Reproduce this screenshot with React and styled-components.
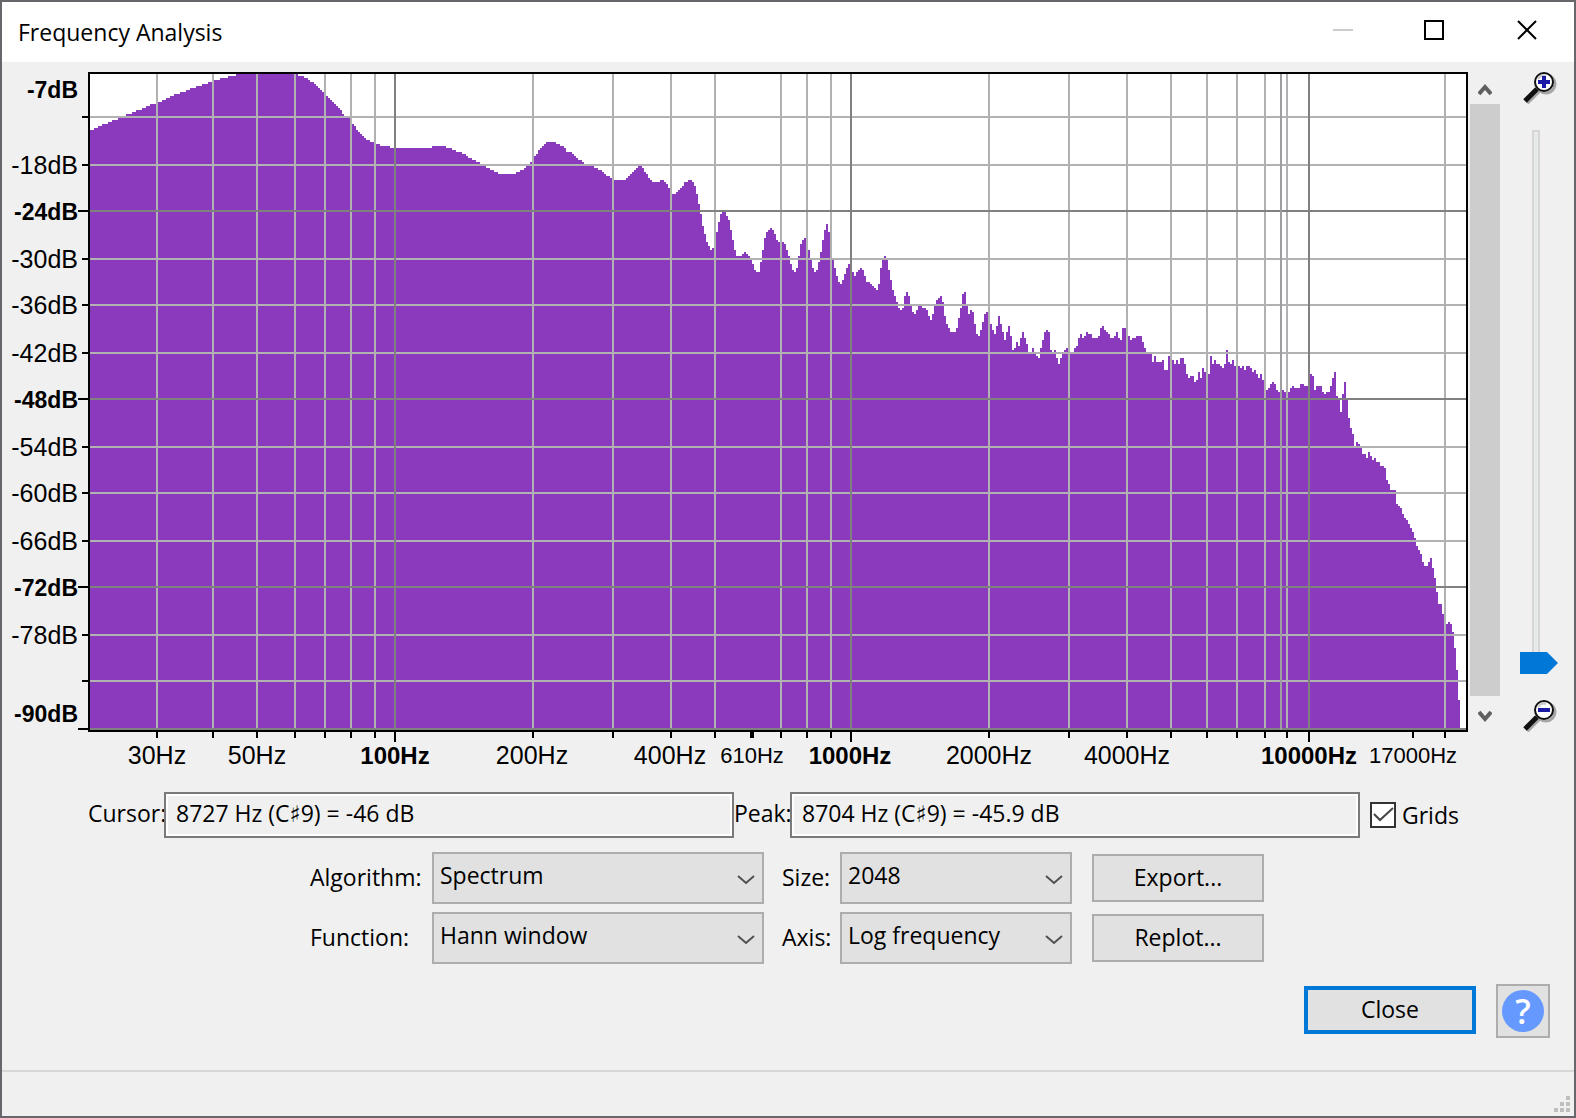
import React, { useState } from "react";
import styled, { createGlobalStyle } from "styled-components";

//Grid lines and ticks of the plot
const X_LINES = [
	156, 212, 256, 294, 324, 350, 374, 532, 612, 670, 714, 780, 806, 830, 988,
	1068, 1126, 1170, 1206, 1236, 1264, 1286, 1444,
];
const X_MAJOR = [394, 850, 1308];
const Y_LINES = [116, 164, 258, 304, 352, 446, 492, 540, 634, 680];
const Y_MAJOR = [210, 398, 586, 728];
const CURSOR_X = 1280;

const DB_LABELS = [
	{ y: 88, text: "-7dB", bold: true },
	{ y: 164, text: "-18dB" },
	{ y: 210, text: "-24dB", bold: true },
	{ y: 258, text: "-30dB" },
	{ y: 304, text: "-36dB" },
	{ y: 352, text: "-42dB" },
	{ y: 398, text: "-48dB", bold: true },
	{ y: 446, text: "-54dB" },
	{ y: 492, text: "-60dB" },
	{ y: 540, text: "-66dB" },
	{ y: 586, text: "-72dB", bold: true },
	{ y: 634, text: "-78dB" },
	{ y: 712, text: "-90dB", bold: true },
];

const HZ_LABELS = [
	{ x: 157, text: "30Hz" },
	{ x: 257, text: "50Hz" },
	{ x: 395, text: "100Hz", bold: true },
	{ x: 532, text: "200Hz" },
	{ x: 670, text: "400Hz" },
	{ x: 752, text: "610Hz", small: true },
	{ x: 850, text: "1000Hz", bold: true },
	{ x: 989, text: "2000Hz" },
	{ x: 1127, text: "4000Hz" },
	{ x: 1309, text: "10000Hz", bold: true },
	{ x: 1413, text: "17000Hz", small: true },
];

//Spectrum, one "x,y" pair for each step
const SPECTRUM = `
90,130 94,128 98,126 102,124 108,122 112,120 118,118 124,116 126,114 132,112
136,110 142,108 146,106 150,104 156,102 162,100 166,98 170,96 174,94 180,92
186,90 190,88 196,86 202,84 208,82 214,80 220,78 228,76 236,74 298,76 304,78
308,80 310,82 314,84 316,86 318,88 320,90 322,92 324,94 326,96 328,98 330,100
332,102 334,104 336,106 338,108 340,110 342,114 344,116 348,118 350,122
352,124 354,126 356,130 358,132 360,134 362,136 364,138 366,140 370,142
374,144 380,146 390,148 432,146 446,148 452,150 456,152 462,154 466,156
468,158 472,160 476,162 480,164 484,166 486,168 490,170 494,172 498,174
516,172 520,170 524,168 526,166 528,164 530,162 532,158 534,156 536,154
538,150 540,148 542,146 544,144 546,142 556,144 560,146 564,148 566,152
572,154 574,156 576,158 578,160 582,162 584,164 588,166 594,168 598,170
602,172 604,174 606,176 610,178 612,180 626,178 628,176 630,174 632,172
634,170 636,168 638,166 642,168 644,172 646,174 648,178 650,180 652,182
660,180 664,182 666,184 668,188 670,192 672,194 676,192 678,190 680,188
682,186 684,182 688,180 692,182 694,186 696,194 698,204 700,214 702,226
704,234 706,242 708,246 710,250 712,248 714,240 716,232 718,222 720,214
722,212 726,216 728,220 730,230 732,240 734,250 736,256 742,254 744,252
746,254 748,256 750,260 752,264 754,270 756,272 760,262 762,250 764,238
766,232 768,230 770,228 772,230 774,234 776,240 778,242 784,244 786,250
788,256 790,264 792,270 794,272 796,268 798,256 800,244 802,240 804,238
806,242 808,250 810,260 812,268 814,272 816,270 818,262 820,252 822,240
824,230 826,224 828,232 830,247 832,260 834,268 836,276 838,282 840,284
842,280 844,274 846,268 848,264 850,268 852,272 854,276 856,272 858,270
860,268 862,270 864,276 866,282 870,284 872,286 874,288 876,290 878,284
880,268 882,260 884,256 886,260 888,270 890,280 892,290 894,296 896,302
898,308 900,310 902,308 904,296 906,292 908,296 910,306 912,312 914,314
916,310 918,306 922,308 926,310 928,316 930,320 932,314 934,306 936,300
938,298 940,296 942,302 944,316 946,324 948,328 950,332 956,328 958,318
960,308 962,294 964,292 966,304 968,314 970,310 972,312 974,324 976,334
978,336 980,330 982,322 984,314 986,312 988,316 990,324 992,330 994,334
996,326 998,316 1000,324 1002,332 1004,340 1006,332 1008,326 1010,336
1012,350 1014,348 1016,342 1018,346 1020,338 1022,332 1024,338 1026,344
1028,352 1032,348 1034,352 1036,356 1038,358 1040,348 1042,340 1044,332
1046,330 1048,332 1050,350 1052,352 1054,350 1056,358 1058,364 1060,358
1062,352 1064,350 1066,348 1068,352 1074,348 1076,346 1078,338 1080,334
1082,338 1084,336 1086,332 1088,334 1092,338 1098,336 1100,328 1102,326
1104,330 1106,332 1108,334 1110,338 1114,336 1116,332 1118,338 1120,340
1122,328 1126,334 1128,336 1130,340 1132,338 1136,336 1142,342 1144,348
1146,352 1152,362 1154,356 1156,362 1162,360 1164,370 1168,356 1170,360
1174,364 1176,360 1178,364 1180,358 1184,364 1186,374 1188,378 1190,376
1194,382 1196,380 1198,372 1200,378 1202,368 1204,372 1206,374 1210,356
1212,364 1214,360 1216,364 1220,366 1222,368 1224,364 1226,350 1228,362
1230,364 1232,360 1234,366 1240,368 1242,366 1244,370 1246,366 1250,368
1252,372 1254,370 1256,374 1258,378 1260,374 1262,380 1264,386 1266,390
1268,388 1270,384 1272,382 1274,384 1276,390 1278,392 1282,390 1284,392
1290,388 1292,386 1294,388 1300,384 1304,386 1308,380 1310,374 1312,376
1314,390 1316,386 1322,392 1324,394 1326,392 1330,386 1332,378 1334,372
1336,396 1338,398 1340,412 1342,394 1344,382 1346,398 1348,418 1350,428
1352,434 1354,446 1356,442 1358,444 1360,448 1362,454 1366,458 1368,452
1370,456 1372,460 1374,458 1376,462 1380,466 1384,468 1386,480 1388,484
1390,490 1396,504 1398,506 1400,508 1402,514 1404,518 1406,520 1408,524
1410,528 1412,532 1414,538 1416,546 1418,550 1420,554 1422,562 1424,566
1428,562 1430,558 1432,568 1434,578 1436,592 1438,604 1442,614 1444,620
1446,624 1448,622 1450,624 1452,632 1454,648 1456,670 1458,700 1460,728
`;

const spectrumPath =
	"M90 730" +
	SPECTRUM.trim()
		.split(/\s+/)
		.map((pair) => {
			const [x, y] = pair.split(",");
			return `H${x}V${y}`;
		})
		.join("") +
	"V730Z";

const Plot = ({ grids }) => (
	<PlotSvg viewBox="2 62 1466 720" role="img" aria-label="Spectrum">
		<g shapeRendering="crispEdges">
			<rect x="90" y="74" width="1376" height="656" fill="#ffffff" />
			<path d={spectrumPath} fill="#8b3abd" />
			{grids && (
				<g>
					{X_LINES.map((x) => (
						<rect key={x} x={x} y="74" width="2" height="656" fill="#b1b0b3" />
					))}
					{Y_LINES.map((y) => (
						<rect key={y} x="90" y={y} width="1376" height="2" fill="#b1b0b3" />
					))}
					{X_MAJOR.map((x) => (
						<rect key={x} x={x} y="74" width="2" height="656" fill="#808080" />
					))}
					{Y_MAJOR.map((y) => (
						<rect key={y} x="90" y={y} width="1376" height="2" fill="#808080" />
					))}
				</g>
			)}
			<rect x={CURSOR_X} y="74" width="2" height="656" fill="#a09da2" />
			<rect x="89" y="73" width="1378" height="658" fill="none" stroke="#000" strokeWidth="2" />
			{[...X_LINES, 1412].map((x) => (
				<rect key={x} x={x} y="732" width="2" height="6" />
			))}
			<rect x="750" y="732" width="4" height="6" />
			{X_MAJOR.map((x) => (
				<rect key={x} x={x} y="732" width="2" height="10" />
			))}
			{Y_LINES.map((y) => (
				<rect key={y} x="82" y={y} width="6" height="2" />
			))}
			{Y_MAJOR.map((y) => (
				<rect key={y} x="78" y={y} width="10" height="2" />
			))}
		</g>
		{DB_LABELS.map(({ y, text, bold }) => (
			<AxisText key={text} x="78" y={y + 10} textAnchor="end" $size={bold ? 23 : 25} $bold={bold}>
				{text}
			</AxisText>
		))}
		{HZ_LABELS.map(({ x, text, bold, small }) => (
			<AxisText
				key={text}
				x={x}
				y={small ? 763 : 764}
				textAnchor="middle"
				$size={small ? 22 : bold ? 24 : 25}
				$bold={bold}
			>
				{text}
			</AxisText>
		))}
	</PlotSvg>
);

const Magnifier = ({ plus }) => (
	<svg width="34" height="34" viewBox="0 0 34 34" aria-hidden="true">
		<g fill="none" stroke="#a6a6a6">
			<circle cx="23" cy="14" r="9" strokeWidth="3" />
			<path d="M4 33L16 21" strokeWidth="4" />
		</g>
		<path d="M2 31L14 19" stroke="#111111" strokeWidth="5" />
		<circle cx="21" cy="12" r="9" fill="#ffffff" stroke="#111111" strokeWidth="2" />
		<path d="M15 9C17 6 20 5 23 6" fill="none" stroke="#c8c8c8" strokeWidth="2" />
		<path d="M15 12H27" stroke="#1a1aa6" strokeWidth="4" />
		{plus && <path d="M21 6V18" stroke="#1a1aa6" strokeWidth="4" />}
	</svg>
);

const ScrollArrow = ({ down }) => (
	<svg width="14" height="14" viewBox="0 0 14 14" aria-hidden="true">
		<path
			d={down ? "M1 3L7 10L13 3" : "M1 12L7 5L13 12"}
			fill="none"
			stroke="#606060"
			strokeWidth="4"
		/>
	</svg>
);

const Choice = ({ id, label, options, indent }) => (
	<>
		<FieldLabel htmlFor={id} $indent={indent}>
			{label}
		</FieldLabel>
		<SelectBox>
			<Select id={id}>
				{options.map((option) => (
					<option key={option}>{option}</option>
				))}
			</Select>
			<svg width="18" height="12" viewBox="0 0 18 12" aria-hidden="true">
				<path d="M1 2L9 9L17 2" fill="none" stroke="#505050" strokeWidth="2" />
			</svg>
		</SelectBox>
	</>
);

const App = () => {
	const [grids, setGrids] = useState(true);

	return (
		<>
			<GlobalStyle />
			<Dialog>
				<TitleBar>
					<Title>Frequency Analysis</Title>
					<WindowButton aria-label="Minimize" disabled>
						<svg width="22" height="22" viewBox="0 0 22 22">
							<path d="M2 10H22" stroke="#cccccc" strokeWidth="2" />
						</svg>
					</WindowButton>
					<WindowButton aria-label="Maximize">
						<svg width="22" height="22" viewBox="0 0 22 22">
							<rect x="2" y="1" width="18" height="18" fill="none" stroke="#000" strokeWidth="2" />
						</svg>
					</WindowButton>
					<WindowButton aria-label="Close window">
						<svg width="22" height="22" viewBox="0 0 22 22">
							<path d="M3 1L21 19M21 1L3 19" stroke="#000" strokeWidth="2" />
						</svg>
					</WindowButton>
				</TitleBar>

				<PlotArea>
					<Plot grids={grids} />
					<ScrollBar>
						<ScrollButton aria-label="Scroll up" $height={30}>
							<ScrollArrow />
						</ScrollButton>
						<ScrollTrack />
						<ScrollButton aria-label="Scroll down" $height={40}>
							<ScrollArrow down />
						</ScrollButton>
					</ScrollBar>
					<ZoomColumn>
						<Magnifier plus />
						<ZoomSlider type="range" min="0" max="100" defaultValue="0" aria-label="Zoom" />
						<Magnifier />
					</ZoomColumn>
				</PlotArea>

				<Readout>
					<ReadoutLabel htmlFor="cursor" $width={76}>
						Cursor:
					</ReadoutLabel>
					<ReadoutField id="cursor" readOnly value="8727 Hz (C♯9) = -46 dB" />
					<ReadoutLabel htmlFor="peak" $width={56}>
						Peak:
					</ReadoutLabel>
					<ReadoutField id="peak" readOnly value="8704 Hz (C♯9) = -45.9 dB" />
					<GridsLabel>
						<CheckBox>
							<input
								type="checkbox"
								checked={grids}
								onChange={(e) => setGrids(e.target.checked)}
							/>
							{grids && (
								<svg width="26" height="26" viewBox="0 0 26 26" aria-hidden="true">
									<path d="M4 12L10 18L23 6" fill="none" stroke="#454545" strokeWidth="2" />
								</svg>
							)}
						</CheckBox>
						Grids
					</GridsLabel>
				</Readout>

				<Controls>
					<Choice id="algorithm" label="Algorithm:" options={["Spectrum"]} />
					<Choice id="size" label="Size:" options={["2048"]} indent />
					<Button>Export...</Button>
					<Choice id="function" label="Function:" options={["Hann window"]} />
					<Choice id="axis" label="Axis:" options={["Log frequency"]} indent />
					<Button>Replot...</Button>
				</Controls>

				<Footer>
					<Button $primary>Close</Button>
					<HelpButton aria-label="Help">
						<span>?</span>
					</HelpButton>
				</Footer>

				<StatusBar>
					<svg width="16" height="16" viewBox="0 0 16 16" aria-hidden="true">
						<path
							d="M12 0h4v4h-4zM6 6h4v4H6zM12 6h4v4h-4zM0 12h4v4H0zM6 12h4v4H6zM12 12h4v4h-4z"
							fill="#bfbfbf"
						/>
					</svg>
				</StatusBar>
			</Dialog>
		</>
	);
};

const GlobalStyle = createGlobalStyle`
	* {
		box-sizing: border-box;
	}
	body {
		margin: 0;
		background: #f0f0f0;
		color: #000;
	}
	body, button, input, select {
		font-family: "Open Sans", "DejaVu Sans", sans-serif;
		font-size: 23px;
		line-height: 32px;
	}
	svg {
		display: block;
	}
`;

const Dialog = styled.main`
	display: flex;
	flex-direction: column;
	min-height: 100vh;
	border: 2px solid #66676a;
	background: #f0f0f0;
`;

const TitleBar = styled.header`
	display: flex;
	height: 60px;
	padding: 0 2px 0 16px;
	background: #fff;
`;

const Title = styled.h1`
	flex: 1;
	margin: 0;
	font-size: 23px;
	font-weight: 400;
	line-height: 60px;
`;

const WindowButton = styled.button`
	display: flex;
	align-items: center;
	justify-content: center;
	width: 92px;
	height: 58px;
	padding: 0;
	border: none;
	background: none;
`;

const PlotArea = styled.section`
	display: flex;
`;

const PlotSvg = styled.svg`
	flex: 1;
	min-width: 0;
`;

const AxisText = styled.text`
	font-family: "Liberation Sans", Arial, sans-serif;
	font-size: ${({ $size }) => $size}px;
	font-weight: ${({ $bold }) => ($bold ? 700 : 400)};
`;

const ScrollBar = styled.div`
	display: flex;
	flex-direction: column;
	width: 30px;
	margin: 12px 0 46px 2px;
`;

const ScrollButton = styled.button`
	display: flex;
	align-items: center;
	justify-content: center;
	height: ${({ $height }) => $height}px;
	padding: 0;
	border: none;
	background: none;
`;

const ScrollTrack = styled.div`
	flex: 1;
	background: #cdcdcd;
`;

const ZoomColumn = styled.div`
	display: flex;
	flex-direction: column;
	align-items: center;
	width: 74px;
	padding: 8px 0 50px 6px;
`;

const ZoomSlider = styled.input`
	flex: 1;
	width: 40px;
	min-height: 0;
	margin: 26px 0 24px;
	appearance: none;
	writing-mode: vertical-lr;
	direction: rtl;
	background:
		linear-gradient(#d6d6d6, #d6d6d6) 12px 0 / 8px 2px no-repeat,
		linear-gradient(
			90deg,
			transparent 12px,
			#d6d6d6 12px 14px,
			#e7eaea 14px 18px,
			#d6d6d6 18px 20px,
			transparent 20px
		);
	&::-webkit-slider-thumb {
		appearance: none;
		width: 40px;
		height: 22px;
		background: #0078d7;
		clip-path: polygon(0 0, 27px 0, 38px 50%, 27px 100%, 0 100%);
	}
`;

const Readout = styled.section`
	display: flex;
	align-items: center;
	margin-top: 10px;
	padding: 0 106px 0 86px;
`;

const ReadoutLabel = styled.label`
	width: ${({ $width }) => $width}px;
	padding-bottom: 4px;
	white-space: nowrap;
`;

const ReadoutField = styled.input`
	flex: 1;
	min-width: 0;
	height: 46px;
	padding: 0 10px 4px;
	border: 2px solid #7a7a7a;
	outline: 2px solid #fff;
	outline-offset: -4px;
	background: #f0f0f0;
`;

const GridsLabel = styled.label`
	display: flex;
	align-items: center;
	gap: 6px;
	width: 108px;
	padding-left: 10px;
`;

const CheckBox = styled.span`
	position: relative;
	input {
		display: block;
		width: 26px;
		height: 26px;
		margin: 0;
		appearance: none;
		border: 2px solid #333;
		background: #fff;
	}
	svg {
		position: absolute;
		top: 0;
		left: 0;
		pointer-events: none;
	}
`;

const Controls = styled.section`
	display: grid;
	grid-template-columns: 122px 332px 76px 232px 192px;
	row-gap: 8px;
	align-items: center;
	justify-content: center;
	margin-top: 14px;
	padding-right: 2px;
	button {
		justify-self: end;
	}
`;

const FieldLabel = styled.label`
	padding: 0 0 2px ${({ $indent }) => ($indent ? 18 : 0)}px;
`;

const SelectBox = styled.div`
	position: relative;
	svg {
		position: absolute;
		top: 22px;
		right: 9px;
		pointer-events: none;
	}
`;

const Select = styled.select`
	display: block;
	width: 100%;
	height: 52px;
	padding: 0 36px 6px 6px;
	appearance: none;
	border: 2px solid #adadad;
	border-radius: 0;
	background: #e1e1e1;
	color: #000;
`;

const Button = styled.button`
	width: 172px;
	height: 48px;
	padding: 0 0 2px;
	border: ${({ $primary }) => ($primary ? "4px solid #0078d7" : "2px solid #adadad")};
	background: #e1e1e1;
	color: #000;
`;

const Footer = styled.footer`
	display: flex;
	justify-content: flex-end;
	gap: 20px;
	margin-top: 20px;
	padding-right: 24px;
	${Button} {
		margin-top: 2px;
	}
`;

const HelpButton = styled.button`
	display: flex;
	align-items: center;
	justify-content: center;
	width: 54px;
	height: 54px;
	padding: 0;
	border: 2px solid #adadad;
	background: #e1e1e1;
	span {
		width: 42px;
		height: 42px;
		border-radius: 50%;
		background: #6699ff;
		color: #fff;
		font-size: 34px;
		font-weight: 600;
		line-height: 42px;
	}
`;

const StatusBar = styled.div`
	display: flex;
	align-items: flex-end;
	justify-content: flex-end;
	height: 46px;
	margin-top: auto;
	padding: 0 4px 4px;
	border-top: 2px solid #d7d7d7;
`;

export default App;
